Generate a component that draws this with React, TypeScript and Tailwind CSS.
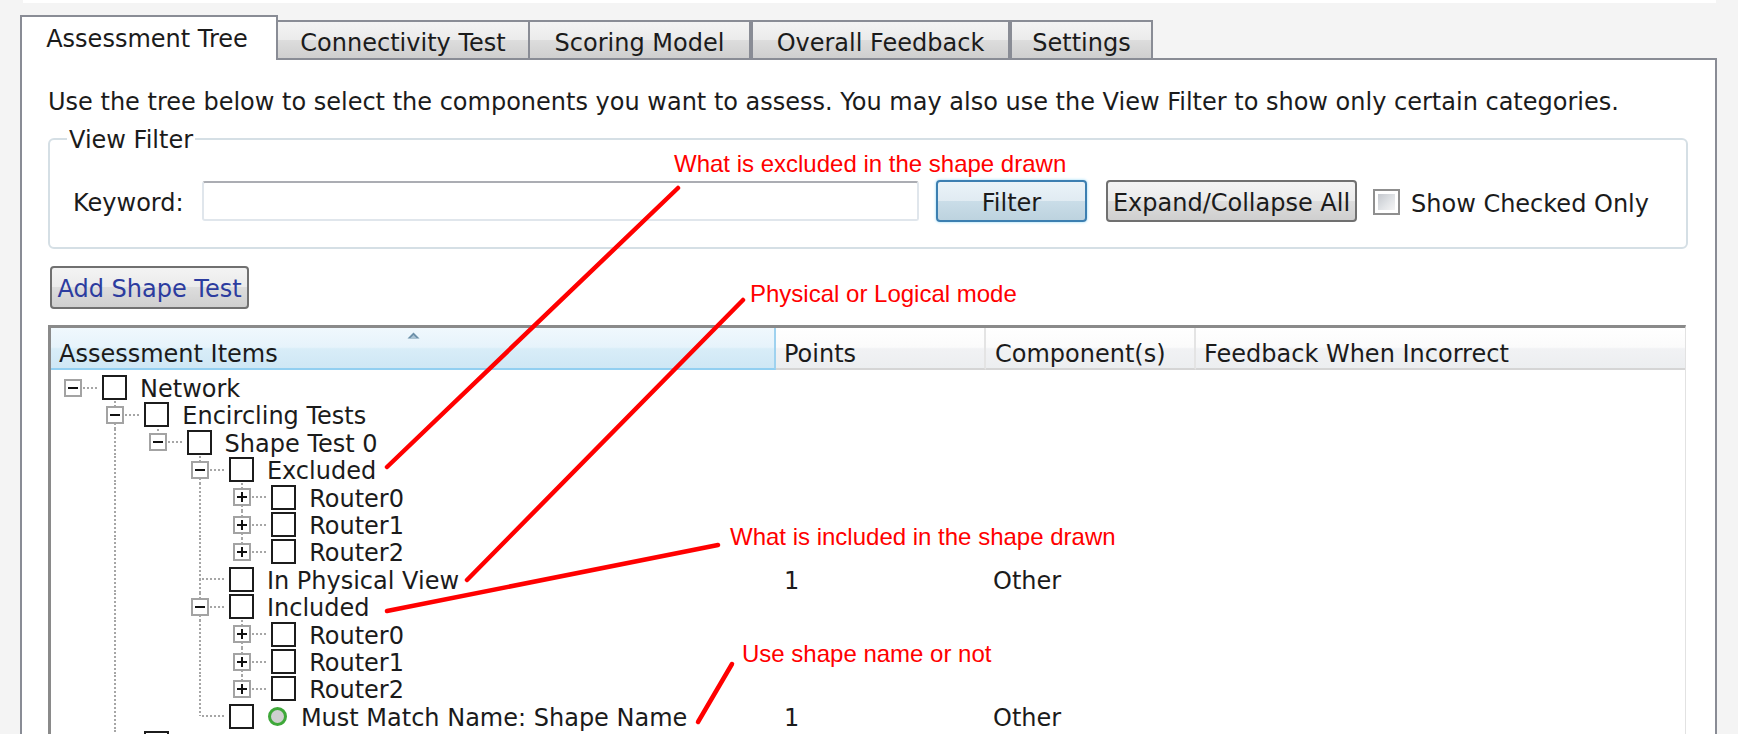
import React from "react";

type Row = {
  label: string;
  level: number;
  exp: "-" | "+" | null;
  guides: boolean[];
  top: boolean;
  bottom: boolean;
  points?: string;
  comp?: string;
  circle?: boolean;
};

const ROWS: Row[] = [
  { label: "Network", level: 0, exp: "-", guides: [], top: false, bottom: false },
  { label: "Encircling Tests", level: 1, exp: "-", guides: [false], top: true, bottom: true },
  { label: "Shape Test 0", level: 2, exp: "-", guides: [false, true], top: true, bottom: false },
  { label: "Excluded", level: 3, exp: "-", guides: [false, true, false], top: true, bottom: true },
  { label: "Router0", level: 4, exp: "+", guides: [false, true, false, true], top: true, bottom: true },
  { label: "Router1", level: 4, exp: "+", guides: [false, true, false, true], top: true, bottom: true },
  { label: "Router2", level: 4, exp: "+", guides: [false, true, false, true], top: true, bottom: false },
  { label: "In Physical View", level: 3, exp: null, guides: [false, true, false], top: true, bottom: true, points: "1", comp: "Other" },
  { label: "Included", level: 3, exp: "-", guides: [false, true, false], top: true, bottom: true },
  { label: "Router0", level: 4, exp: "+", guides: [false, true, false, true], top: true, bottom: true },
  { label: "Router1", level: 4, exp: "+", guides: [false, true, false, true], top: true, bottom: true },
  { label: "Router2", level: 4, exp: "+", guides: [false, true, false, true], top: true, bottom: false },
  { label: "Must Match Name: Shape Name", level: 3, exp: null, guides: [false, true, false], top: true, bottom: false, points: "1", comp: "Other", circle: true },
  { label: "", level: 1, exp: "+", guides: [false], top: true, bottom: false },
];

const VDOT = "bg-[repeating-linear-gradient(to_bottom,#a6a6a6_0px,#a6a6a6_2px,transparent_2px,transparent_4px)]";
const HDOT = "bg-[repeating-linear-gradient(to_right,#a6a6a6_0px,#a6a6a6_2px,transparent_2px,transparent_4px)]";

function Expander({ kind }: { kind: "-" | "+" }) {
  return (
    <div className="relative z-10 flex h-[18px] w-[18px] shrink-0 items-center justify-center border-2 border-[#a3a3a3] bg-white">
      <svg width="10" height="10" viewBox="0 0 10 10">
        <rect x="0" y="4" width="10" height="2" fill="#111" />
        {kind === "+" && <rect x="4" y="0" width="2" height="10" fill="#111" />}
      </svg>
    </div>
  );
}

function TreeRow({ r }: { r: Row }) {
  return (
    <div className="flex h-[27.42px]">
      <div className="flex h-full w-[725px] shrink-0 items-center pl-[13px]">
        {r.guides.map((g, i) => (
          <div key={i} className="relative h-full w-[42.3px] shrink-0">
            {g && <div className={`absolute left-[8px] top-0 h-full w-[2px] ${VDOT}`} />}
          </div>
        ))}
        <div className="relative flex h-full items-center">
          {r.top && <div className={`absolute left-[8px] top-0 h-1/2 w-[2px] ${VDOT}`} />}
          {r.bottom && <div className={`absolute left-[8px] top-1/2 h-1/2 w-[2px] ${VDOT}`} />}
          {r.exp ? (
            <>
              <div className={`absolute left-[19px] top-[calc(50%-1px)] h-[2px] w-[15px] ${HDOT}`} />
              <Expander kind={r.exp} />
            </>
          ) : (
            <>
              <div className={`absolute left-[11px] top-[calc(50%-1px)] h-[2px] w-[22px] ${HDOT}`} />
              <div className="h-[18px] w-[18px] shrink-0" />
            </>
          )}
          <div className="ml-[20px] h-[25px] w-[25px] shrink-0 border-2 border-[#1c1c1c] bg-white" />
          {r.circle && (
            <div className="ml-[14px] h-[19px] w-[19px] shrink-0 rounded-full border-[3px] border-[#3fa83a] bg-[#cfcfcf]" />
          )}
          {r.label && (
            <span className={`${r.circle ? "ml-[14px]" : "ml-[13px]"} whitespace-nowrap pt-[4px] leading-[27px]`}>{r.label}</span>
          )}
        </div>
      </div>
      <div className="flex h-full w-[210px] shrink-0 items-center pl-[8px] pt-[4px] leading-[27px]">{r.points}</div>
      <div className="flex h-full w-[210px] shrink-0 items-center pl-[7px] pt-[4px] leading-[27px]">{r.comp}</div>
      <div className="flex-1" />
    </div>
  );
}

const GRAD_BTN = "bg-[linear-gradient(to_bottom,#f3f3f3_0%,#ebebeb_50%,#dddddd_50%,#cfcfcf_100%)]";
const GRAD_HDR = "bg-[linear-gradient(to_bottom,#ffffff_0%,#fbfbfb_48%,#f1f2f4_52%,#eceef0_100%)]";
const GRAD_SORT = "bg-[linear-gradient(to_bottom,#f0f8fd_0%,#e6f3fb_48%,#d8edf8_52%,#cfe7f5_100%)]";

export default function App() {
  return (
    <div className="relative h-[734px] w-[1738px] overflow-hidden bg-[#f4f4f4] font-['DejaVu_Sans',sans-serif] text-[24px] text-[#1b1b1b]">
      <div className="ml-[23px] h-[3px] w-[1693px] bg-white" />
      <div className="ml-[20px] mt-[12px] w-[1697px]">
        {/* tabs */}
        <div className="flex h-[43px] items-end">
          <div className="relative z-10 -mb-[2px] flex h-[45px] w-[258px] items-start justify-center border-2 border-b-0 border-[#898c95] bg-white pr-[4px] pt-[9px] leading-[27px]">
            Assessment Tree
          </div>
          <div className={`flex h-[38px] w-[252px] items-center justify-center border-2 border-b-0 border-l-0 border-[#898c95] ${GRAD_BTN} pt-[6px] leading-[27px]`}>
            Connectivity Test
          </div>
          <div className={`flex h-[38px] w-[221px] items-center justify-center border-2 border-b-0 border-l-0 border-[#898c95] ${GRAD_BTN} pt-[6px] leading-[27px]`}>
            Scoring Model
          </div>
          <div className={`flex h-[38px] w-[259px] items-center justify-center border-2 border-b-0 border-[#898c95] ${GRAD_BTN} pt-[6px] leading-[27px]`}>
            Overall Feedback
          </div>
          <div className={`flex h-[38px] w-[143px] items-center justify-center border-2 border-b-0 border-[#898c95] ${GRAD_BTN} pt-[6px] leading-[27px]`}>
            Settings
          </div>
        </div>

        {/* panel */}
        <div className="h-[700px] border-2 border-[#898c95] bg-white pl-[26px] pt-[28.5px]">
          <p className="whitespace-nowrap leading-[27px]">
            Use the tree below to select the components you want to assess. You may also use the View Filter to show only certain categories.
          </p>

          <fieldset className="mt-[9px] w-[1640px] rounded-[6px] border-2 border-[#d5dfe5]">
            <legend className="ml-[17px] px-[2px] pt-[2px] leading-[27px]">View Filter</legend>
            <div className="mb-[25px] mt-[26.5px] flex h-[42px] items-center pl-[23px]">
              <span className="w-[113px] shrink-0 whitespace-nowrap pt-[5px] leading-[27px]">Keyword:</span>
              <div className="ml-[16px] h-[40px] w-[717px] shrink-0 rounded-[3px] border-2 border-[#e0e6ec] border-t-[#abadb3] bg-white" />
              <button className="ml-[17px] flex h-[42px] w-[151px] shrink-0 items-center justify-center rounded-[4px] border-2 border-[#3c7fb1] bg-[linear-gradient(to_bottom,#eaf3f8_0%,#e0ebf2_50%,#cadde8_50%,#bdd3df_100%)] pt-[4px] leading-[27px] shadow-[0_0_3px_#8fd6f7]">
                Filter
              </button>
              <button className={`ml-[19px] flex h-[42px] w-[251px] shrink-0 items-center justify-center rounded-[4px] border-2 border-[#707070] ${GRAD_BTN} whitespace-nowrap pt-[4px] leading-[27px]`}>
                Expand/Collapse All
              </button>
              <div className="ml-[16px] mt-[2px] flex h-[26px] w-[27px] shrink-0 items-center justify-center border-2 border-[#8f8f8f] bg-white">
                <div className="h-[16px] w-[17px] bg-[linear-gradient(135deg,#c4c8ce_0%,#e3e5e8_60%,#f4f4f4_100%)]" />
              </div>
              <span className="ml-[11px] whitespace-nowrap pt-[6px] leading-[27px]">Show Checked Only</span>
            </div>
          </fieldset>

          <button className={`ml-[2px] mt-[17px] flex h-[43px] w-[199px] items-center justify-center rounded-[4px] border-2 border-[#707070] ${GRAD_BTN} whitespace-nowrap pt-[4px] leading-[27px] text-[#2c3c9f]`}>
            Add Shape Test
          </button>

          {/* table */}
          <div className="mt-[16px] h-[420px] w-[1638px] border-l-[3px] border-r border-t-[3px] border-[#8a8a8a] border-r-[#e2e2e2] bg-white">
            <div className="flex h-[42px]">
              <div className={`relative flex h-full w-[725px] shrink-0 items-center border-b-2 border-r-2 border-b-[#92cff1] border-r-[#9fd2ef] pl-[8px] pt-[12px] leading-[27px] ${GRAD_SORT}`}>
                <svg className="absolute left-[356px] top-[4px]" width="13" height="7" viewBox="0 0 13 7">
                  <path d="M0.5 6.5 L6.5 0.5 L12.5 6.5 Z" fill="#6b8fa8" />
                  <path d="M3 6.5 L6.5 3 L10 6.5 Z" fill="#a9c3d4" />
                </svg>
                Assessment Items
              </div>
              <div className={`flex h-full w-[210px] shrink-0 items-center border-b-2 border-r-2 border-b-[#d5d5d5] border-r-[#e4e4e4] pl-[8px] pt-[12px] leading-[27px] ${GRAD_HDR}`}>
                Points
              </div>
              <div className={`flex h-full w-[210px] shrink-0 items-center border-b-2 border-r-2 border-b-[#d5d5d5] border-r-[#e4e4e4] pl-[9px] pt-[12px] leading-[27px] ${GRAD_HDR}`}>
                Component(s)
              </div>
              <div className={`flex h-full flex-1 items-center border-b-2 border-b-[#d5d5d5] pl-[8px] pt-[12px] leading-[27px] ${GRAD_HDR}`}>
                Feedback When Incorrect
              </div>
            </div>
            <div className="pt-[3.8px]">
              {ROWS.map((r, i) => (
                <TreeRow key={i} r={r} />
              ))}
            </div>
          </div>
        </div>
      </div>

      {/* annotations */}
      <svg className="pointer-events-none absolute left-0 top-0 z-20" width="1738" height="734" viewBox="0 0 1738 734">
        <g stroke="#ff0000" strokeWidth="4.5" strokeLinecap="round">
          <line x1="678" y1="188" x2="387" y2="467" />
          <line x1="743" y1="300" x2="467" y2="580" />
          <line x1="718" y1="545" x2="387" y2="611" />
          <line x1="732" y1="664" x2="698" y2="722" />
        </g>
      </svg>
      <div className="pointer-events-none absolute left-[674px] top-[151.7px] z-20 whitespace-nowrap font-['Liberation_Sans',Arial,sans-serif] text-[24px] leading-[24px] text-[#ff0000]">
        What is excluded in the shape drawn
      </div>
      <div className="pointer-events-none absolute left-[750px] top-[281.7px] z-20 whitespace-nowrap font-['Liberation_Sans',Arial,sans-serif] text-[24px] leading-[24px] text-[#ff0000]">
        Physical or Logical mode
      </div>
      <div className="pointer-events-none absolute left-[730px] top-[524.7px] z-20 whitespace-nowrap font-['Liberation_Sans',Arial,sans-serif] text-[24px] leading-[24px] text-[#ff0000]">
        What is included in the shape drawn
      </div>
      <div className="pointer-events-none absolute left-[742px] top-[641.7px] z-20 whitespace-nowrap font-['Liberation_Sans',Arial,sans-serif] text-[24px] leading-[24px] text-[#ff0000]">
        Use shape name or not
      </div>
    </div>
  );
}
